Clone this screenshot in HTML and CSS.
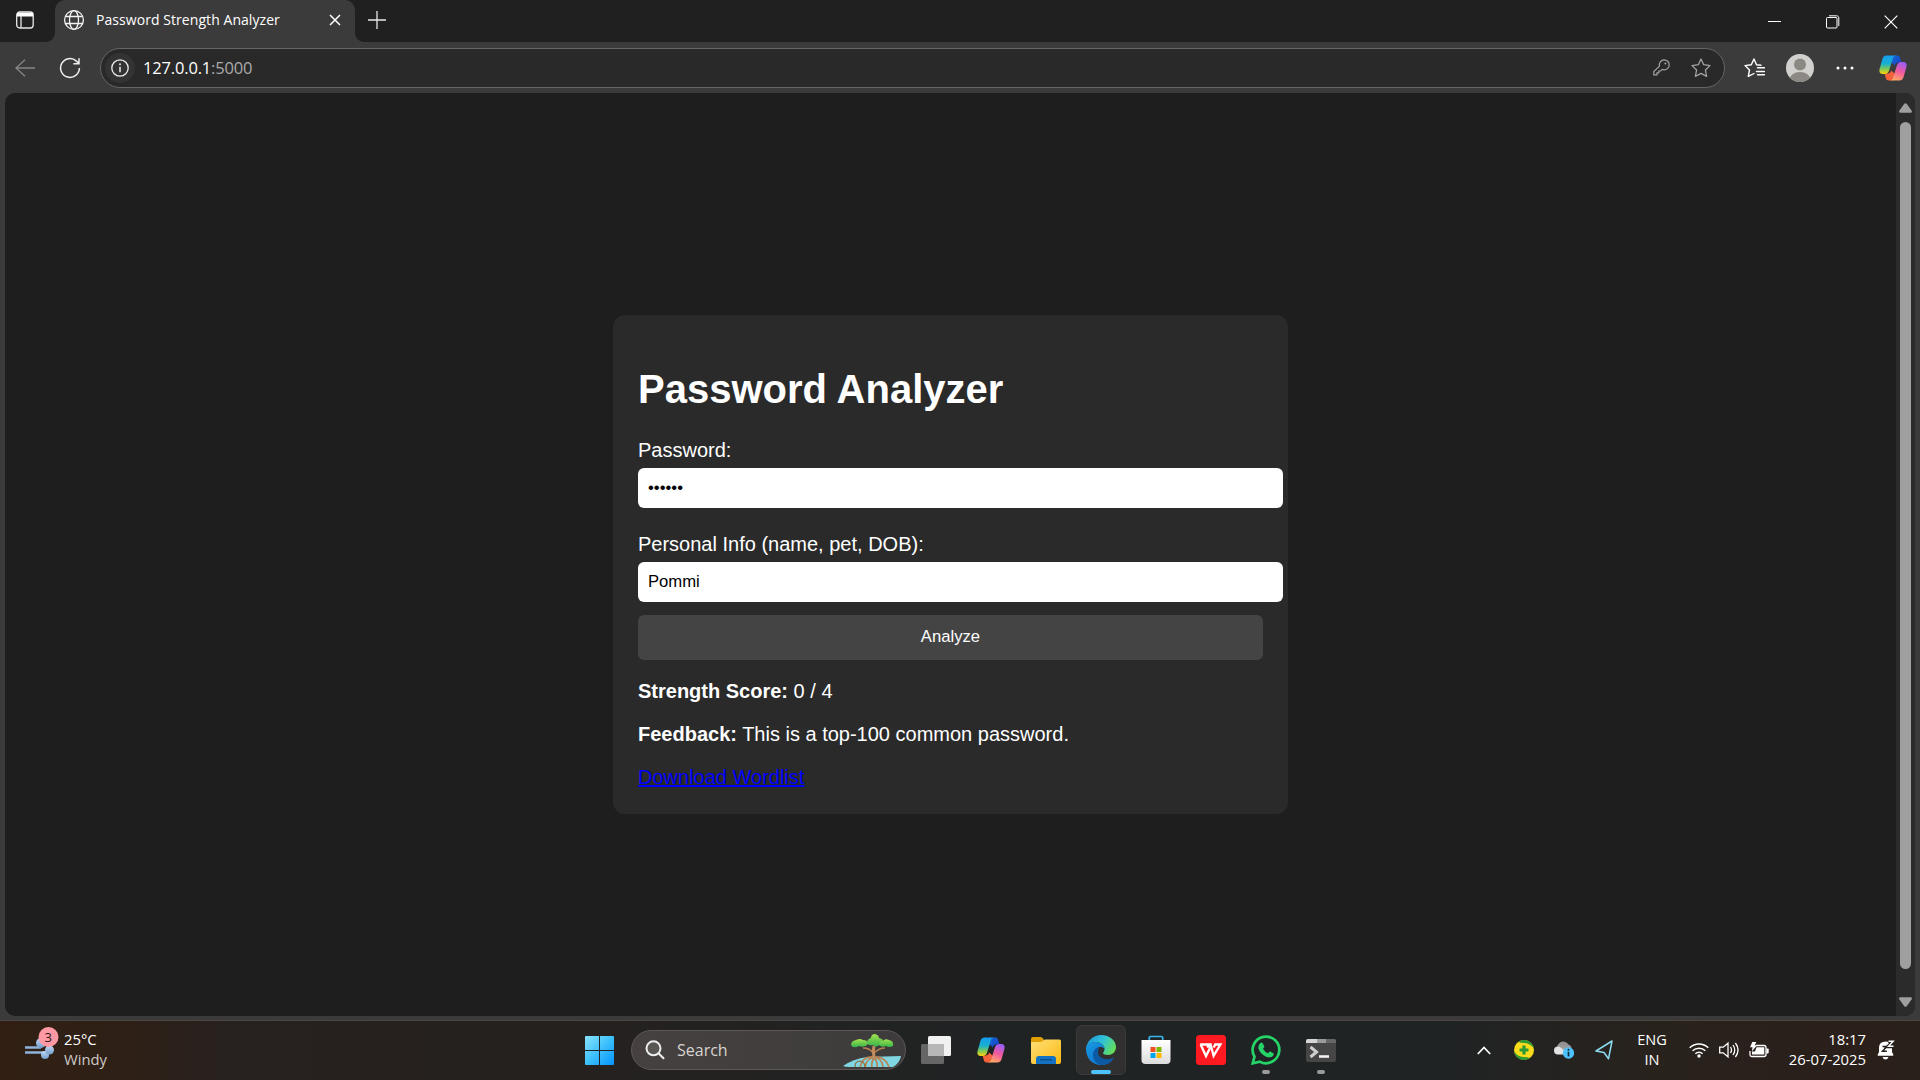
FILE: index.html
```html
<!DOCTYPE html>
<html lang="en">
<head>
<meta charset="utf-8">
<title>Password Strength Analyzer</title>
<link rel="stylesheet" href="styles.css">
</head>
<body>
<svg class="defs" width="0" height="0" aria-hidden="true">
  <defs>
    <linearGradient id="cpL" x1="0" y1="0" x2="0" y2="1"><stop offset="0" stop-color="#159cf0"/><stop offset=".45" stop-color="#18b0cf"/><stop offset=".72" stop-color="#7cc858"/><stop offset="1" stop-color="#ffd10a"/></linearGradient>
    <linearGradient id="cpR" x1=".7" y1="0" x2=".3" y2="1"><stop offset="0" stop-color="#9a5cf5"/><stop offset=".5" stop-color="#f45a9c"/><stop offset="1" stop-color="#ffad62"/></linearGradient>
    <linearGradient id="cpT" x1="0" y1="0" x2="1" y2="1"><stop offset="0" stop-color="#1268d8"/><stop offset="1" stop-color="#1b3fc0"/></linearGradient>
    <linearGradient id="win" gradientUnits="userSpaceOnUse" x1="0" y1="0" x2="29" y2="29"><stop offset="0" stop-color="#8be3fe"/><stop offset=".5" stop-color="#3cc0fc"/><stop offset="1" stop-color="#0594fb"/></linearGradient>
    <linearGradient id="folder" x1="0" y1="0" x2="1" y2="1"><stop offset="0" stop-color="#ffe07a"/><stop offset="1" stop-color="#fbb90f"/></linearGradient>
    <linearGradient id="edgeTop" x1="0" y1=".3" x2="1" y2=".7"><stop offset="0" stop-color="#1d9bdc"/><stop offset=".5" stop-color="#32c3d4"/><stop offset="1" stop-color="#69e04f"/></linearGradient>
    <linearGradient id="edgeLow" x1="0" y1="0" x2="1" y2="1"><stop offset="0" stop-color="#169be3"/><stop offset="1" stop-color="#1066c4"/></linearGradient>
    <linearGradient id="bag" x1="0" y1="0" x2="0" y2="1"><stop offset="0" stop-color="#fff"/><stop offset="1" stop-color="#dcdcdc"/></linearGradient>
    <linearGradient id="wind" x1="0" y1="0" x2="0" y2="1"><stop offset="0" stop-color="#c4dbf4"/><stop offset="1" stop-color="#6f9cc9"/></linearGradient>
    <linearGradient id="leaf" x1="0" y1="0" x2="0" y2="1"><stop offset="0" stop-color="#a4e04e"/><stop offset="1" stop-color="#35b54a"/></linearGradient>
    <linearGradient id="cloud" x1="0" y1="0" x2="0" y2="1"><stop offset="0" stop-color="#8d8d8d"/><stop offset="1" stop-color="#a8a8a8"/></linearGradient>
    <symbol id="copilot" viewBox="0 0 28 26">
      <path d="M15 .5h3.200c1.600 0 2.500.8 2.900 2.200l1.400 4.800h-3c-2 0-3.100 1.100-3.700 3L12 7z" fill="url(#cpT)"/>
      <path d="M13 25.500H9.800c-1.600 0-2.500-.8-2.900-2.200L5.500 18.500h3c2 0 3.100-1.100 3.700-3L16 19z" fill="#f4633c"/>
      <path d="M7.500.5h9.700c-2 0-2.900 1.500-3.500 3.500l-3.600 11.500c-.7 2.200-2 3.500-4.500 3.500H3.500C.8 19-.2 16.700.6 14L3.400 4C4.100 1.700 5.300.5 7.500.5z" fill="url(#cpL)"/>
      <path d="M20.500 25.500h-9.700c2 0 2.900-1.500 3.500-3.500l3.600-11.500c.7-2.200 2-3.500 4.500-3.500h2.100c2.700 0 3.700 2.300 2.900 5l-2.800 10c-.7 2.300-1.900 3.500-4.100 3.500z" fill="url(#cpR)"/>
    </symbol>
  </defs>
</svg>

<header class="tabstrip">
  <div class="strip-left">
    <svg width="20" height="20" viewBox="0 0 20 20" fill="none" stroke="#e8e8e8" stroke-width="1.300"><rect x="1.700" y="2" width="16.500" height="16" rx="3"/><path d="M2 2.800h16v3.700H2z" fill="#fff" stroke="none"/><path d="M6 6v12"/></svg>
  </div>
  <div class="tab-slot">
    <div class="tab">
      <svg width="22" height="22" viewBox="0 0 22 22" fill="none" stroke="#f2f2f2" stroke-width="1.300"><circle cx="11" cy="11" r="9.400"/><ellipse cx="11" cy="11" rx="4.500" ry="9.400"/><path d="M2.300 7.500h17.400M2.300 14.500h17.400"/></svg>
      <span class="tab-title">Password Strength Analyzer</span>
      <svg class="tab-close" width="12" height="12" viewBox="0 0 12 12" stroke="#fff" stroke-width="1.500"><path d="M1 1l10 10M11 1L1 11"/></svg>
    </div>
  </div>
  <div class="strip-right">
    <svg width="18" height="18" viewBox="0 0 18 18" stroke="#e8e8e8" stroke-width="1.300"><path d="M9 0v18M0 9h18"/></svg>
    <div class="window-buttons">
      <svg width="14" height="14" viewBox="0 0 14 14" stroke="#fff"><path d="M0 6.500h13"/></svg>
      <svg width="14" height="14" viewBox="0 0 14 14" fill="none" stroke="#fff"><rect x=".5" y="2.500" width="10.500" height="10.500" rx="1"/><path d="M3 .8h7.500c1.400 0 2.300.9 2.300 2.300V11"/></svg>
      <svg width="14" height="14" viewBox="0 0 14 14" stroke="#fff" stroke-width="1.200"><path d="M.7.7l12.600 12.600M13.300.7L.7 13.300"/></svg>
    </div>
  </div>
</header>

<nav class="toolbar">
  <svg class="back" width="20" height="18" viewBox="0 0 20 18" fill="none" stroke="#858585" stroke-width="1.300"><path d="M20 9H1M10 .7L1 9l9 8.300"/></svg>
  <svg class="reload" width="22" height="22" viewBox="0 0 22 22" fill="none" stroke="#f0f0f0" stroke-width="1.500"><path d="M20.400 11a9.400 9.400 0 1 1-3-6.900L20 6.500M20 1.200v5.500h-5.600"/></svg>
  <div class="address">
    <div class="site-info">
      <svg width="18" height="18" viewBox="0 0 18 18" fill="none" stroke="#eee" stroke-width="1.300"><circle cx="9" cy="9" r="8.200"/><path d="M9 7.700v5.500" stroke-width="1.500"/><circle cx="9" cy="5.300" r=".95" fill="#eee" stroke="none"/></svg>
    </div>
    <span class="url">127.0.0.1<span class="port">:5000</span></span>
    <svg class="key" width="17" height="17" viewBox="0 0 17 17" fill="none" stroke="#a2a2a2" stroke-width="1.200"><path d="M11.200.8a5 5 0 0 1 0 10c-.7 0-1.400-.1-2-.4L7.700 12H5.800v1.900H4v1.900H.8v-3.300l5.700-5.400A5 5 0 0 1 11.200.8z"/><circle cx="12.400" cy="4.600" r="1" fill="#a2a2a2" stroke="none"/></svg>
    <svg class="star" width="20" height="20" viewBox="0 0 20 20" fill="none" stroke="#a2a2a2" stroke-width="1.300" stroke-linejoin="round"><path d="M10 1l2.700 5.700 6.300.9-4.600 4.400 1.200 6.400L10 15.400l-5.600 3 1.200-6.400L1 7.600l6.300-.9z"/></svg>
  </div>
  <svg class="favorites" width="21" height="20" viewBox="0 0 21 20" fill="none" stroke="#fff" stroke-width="1.400" stroke-linejoin="round" stroke-linecap="round"><path d="M17 7.200l-4.500-.5L10 1 7.300 6.700 1 7.600 5.500 12l-1.200 6.400L10 15.500M13.500 9.800h7M12.500 13.500h8M13.500 16.800h7"/></svg>
  <svg class="profile" width="28" height="28" viewBox="0 0 28 28"><clipPath id="av"><circle cx="14" cy="14" r="14"/></clipPath><g clip-path="url(#av)"><path d="M0 0h28v28H0z" fill="#d2d0ce"/><circle cx="14" cy="10.500" r="6" fill="#8c8884"/><ellipse cx="14" cy="26" rx="10.500" ry="8" fill="#8c8884"/></g></svg>
  <svg class="more" width="18" height="4" viewBox="0 0 18 4" fill="#fff"><circle cx="2" cy="2" r="1.500"/><circle cx="9" cy="2" r="1.500"/><circle cx="16" cy="2" r="1.500"/></svg>
  <svg class="assistant" width="28" height="26"><use href="#copilot"/></svg>
</nav>

<div class="viewport-frame">
  <div class="viewport">
    <main class="page">
      <form class="card">
        <h1>Password Analyzer</h1>
        <label for="pw">Password:</label>
        <input id="pw" type="password" value="123456">
        <label class="second" for="info">Personal Info (name, pet, DOB):</label>
        <input id="info" type="text" value="Pommi">
        <button type="button">Analyze</button>
        <p><strong>Strength Score:</strong> 0 / 4</p>
        <p><strong>Feedback:</strong> This is a top-100 common password.</p>
        <a href="#">Download Wordlist</a>
      </form>
    </main>
    <div class="scrollbar">
      <svg width="13" height="10" viewBox="0 0 13 10" fill="#9f9f9f"><path d="M5.300.8q1.200-1.200 2.400 0l5 7q.6 2-1 2H1.300q-1.600 0-1-2z"/></svg>
      <div class="thumb"></div>
      <svg width="13" height="10" viewBox="0 0 13 10" fill="#9f9f9f"><path d="M5.300 9.200q1.200 1.200 2.400 0l5-7q.6-2-1-2H1.300q-1.600 0-1 2z"/></svg>
    </div>
  </div>
</div>

<footer class="taskbar">
  <div class="weather">
    <svg class="weather-icon" width="36" height="34" viewBox="0 0 36 34"><path d="M1 20.500h16M1 25.500h22" stroke="#8fb4dc" stroke-width="2.600"/><circle cx="17" cy="16" r="5" fill="url(#wind)"/><circle cx="21" cy="28" r="4" fill="url(#wind)"/><circle cx="25.500" cy="23" r="4.500" fill="url(#wind)"/><circle cx="24.500" cy="10" r="10" fill="#ff99a4"/><text class="badge" x="24.300" y="15" text-anchor="middle">3</text></svg>
    <div class="weather-text"><span>25°C</span><span class="muted">Windy</span></div>
  </div>

  <div class="apps">
    <div class="app start"><svg width="29" height="29" viewBox="0 0 29 29" fill="url(#win)"><path d="M1 0h13v14H0V1q0-1 1-1zM15 0h13q1 0 1 1v13H15zM0 15h14v14H1q-1 0-1-1zM15 15h14v13q0 1-1 1H15z"/></svg></div>
    <div class="search">
      <svg width="20" height="20" viewBox="0 0 20 20" fill="none" stroke="#eee" stroke-width="2" stroke-linecap="round"><circle cx="8.500" cy="8.300" r="7" fill="#5a5654"/><path d="M13.700 13.500l4.800 4.800"/></svg>
      <span>Search</span>
      <svg class="tree" width="58" height="35" viewBox="0 0 58 35"><path d="M0 32Q10 25 24 23l34-1q-1 7-8 11H6q-4 0-6-1z" fill="#7fd6e2"/><g fill="none" stroke="#b98250" stroke-width="1.600"><path d="M20 14q7 0 10 5M42 14q-6 0-11 5M30 23q-10-1-13 10M30 24q-6 0-8 9M31 24q-3 4-2 9M31 24q4 3 3 9M31 23q8 1 9 10M31 23q11-1 15 10"/><path d="M12 33q0-6 5-6 5 1 5 6" stroke-width="1.200" stroke="#8f6c36"/></g><path d="M31 12q-1.500 5 0 11" fill="none" stroke="#c48c5c" stroke-width="3"/><g fill="url(#leaf)"><path d="M8 11q0-4 5-5 4-2 7 0 5 0 5 4-3 4-9 2-6 3-8-1z"/><path d="M24 9q0-4 4-5 0-4 4-4 4 1 4 4 5 1 5 5-1 3-5 2-3 3-6 0-5 1-6-2z"/><path d="M36 11q0-4 4-4 2-3 6-1 5 1 4 6-4 2-7 0-4 2-7-1z"/></g></svg>
    </div>
    <div class="app"><svg width="30" height="28" viewBox="0 0 30 28"><rect y="8" width="23" height="20" rx="1.500" fill="#666"/><rect x="7" width="23" height="20" rx="1.500" fill="#f1f1f1"/><path d="M7 8h16v12H8.500Q7 20 7 18.500z" fill="#b7b7b7"/></svg></div>
    <div class="app"><svg width="28" height="26"><use href="#copilot"/></svg></div>
    <div class="app"><svg width="30" height="27" viewBox="0 0 30 27"><path d="M0 2q0-2 2-2h7.500q1.500 0 2.500 1.500L14 5v4H0z" fill="#e0a005"/><path d="M0 6q0-1 1-1h9l4-2.500h14.500q1.500 0 1.500 1.500v21q0 2-2 2H2q-2 0-2-2z" fill="url(#folder)"/><path d="M5 27v-5q0-3 3-3h14q3 0 3 3v5z" fill="#1372c4"/><path d="M9 22.700h12" stroke="#0c4d8c" stroke-width="1.400"/></svg></div>
    <div class="app active"><svg width="30" height="30" viewBox="0 0 30 30"><path d="M0 14C1 5 8 0 15 0c9 0 15 6 15 12 0 5-4 8-8 8-3 0-5-1-5-2 0-.7 1.500-1.500 1.500-4 0-3-3-7-9-7C5 7 1 10 0 14z" fill="url(#edgeTop)"/><path d="M0 14c0-4 4-7 9.500-7 6 0 9 4 9 7-1-1.500-2.500-2-4-2-3 0-5 2.500-5 6 0 5 4 9 10 9 3 0 5-.8 7-1.800C24 28 20 30 15 30 6 30 0 23 0 14z" fill="url(#edgeLow)"/><path d="M13 12c-4 1-6 4-6 8 0 5 4 9.500 9 10 5-.2 8.500-2.500 11.300-6.300.4-.8-.2-1.200-.8-.8-1.500.8-3.500 1.300-5.500 1.300-5 0-9-3-9-7 0-2 .7-3.500 1-5.200z" fill="#0c59a4"/></svg><i class="pill"></i></div>
    <div class="app"><svg width="30" height="30" viewBox="0 0 30 30"><path d="M8.300 7V2.500q0-1 1-1h11.400q1 0 1 1V7" fill="none" stroke="#35b5ec" stroke-width="1.700"/><path d="M.5 5h29v20q0 4-4 4H4.500q-4 0-4-4z" fill="url(#bag)"/><path d="M9.500 12h5v5h-5z" fill="#f25022"/><path d="M15.500 12h5v5h-5z" fill="#7fba00"/><path d="M9.500 18h5v5h-5z" fill="#00a4ef"/><path d="M15.500 18h5v5h-5z" fill="#ffb900"/></svg></div>
    <div class="app"><svg width="30" height="30" viewBox="0 0 30 30"><rect width="30" height="30" rx="3.500" fill="#ff1921"/><path d="M4.200 9.500h9.300l-2.300 3M4.600 9.500L10 21l5-10 2.600 9.800 6.800-11.300h-5.200l-1.500 3" fill="none" stroke="#fff" stroke-width="2.300"/></svg></div>
    <div class="app"><svg width="30" height="30" viewBox="0 0 30 30"><path d="M1.700 28.300l1.800-6.700A13.300 13.300 0 1 1 8.700 26.600z" fill="none" stroke="#25d366" stroke-width="2.700"/><path d="M9.200 8.200q1.300-1.300 2.500 0l1.700 3.300q0 .8-1.400 2.200 1.800 3.300 5 4.600 1.300-1.800 2.200-1.700l3.200 1.600q.9 1.300-.8 3-2.500 2.200-7 .2-5.300-2.700-7-7.400-.9-3.600 1.600-5.800z" fill="#25d366"/></svg><i class="dot"></i></div>
    <div class="app"><svg width="30" height="23" viewBox="0 0 30 23"><rect width="30" height="23" rx="2" fill="#464646"/><path d="M0 4V2q0-2 2-2h9v4z" fill="#d6d6d6"/><path d="M11 0h9v4h-9z" fill="#9b9b9b"/><path d="M20 0h8q2 0 2 2v2H20z" fill="#666"/><path d="M4.500 8l6 5-6 5" fill="none" stroke="#cfcfcf" stroke-width="3"/><path d="M13 17.500h10" stroke="#f2f2f2" stroke-width="2.600"/></svg><i class="dot"></i></div>
  </div>

  <div class="tray">
    <div class="tray-icon"><svg width="14" height="9" viewBox="0 0 14 9" fill="none" stroke="#fff" stroke-width="1.700"><path d="M.8 8L7 1.500 13.200 8"/></svg></div>
    <div class="tray-icon"><svg width="20" height="20" viewBox="0 0 20 20"><circle cx="10" cy="10" r="10" fill="#fadb19"/><path d="M4 2Q12-3 18 4q1.500 2 1.700 4.500-3-5-9-5.500-4 0-6.700-1z" fill="#2b9a36"/><path d="M16 18q-8 5-14-2Q.5 14 .3 11.500q3 5 9 5.500 4 0 6.700 1z" fill="#2b9a36"/><path d="M10 5.500v9M5.500 10h9" stroke="#2b9a36" stroke-width="3.200"/></svg></div>
    <div class="tray-icon"><svg width="20" height="18" viewBox="0 0 20 18"><path d="M4 10A6 6 0 0 1 14.500 3.500q3 1 3 4V12H4z" fill="url(#cloud)"/><path d="M4 13.500a4 4 0 0 1 0-8q2 0 3.500 1.500L14 13.500z" fill="#e2e2e2"/><circle cx="14.500" cy="12" r="5.700" fill="#4cc2ff"/><path d="M14.500 10.800v4.600" stroke="#102a3a" stroke-width="1.700"/><circle cx="14.500" cy="8.800" r="1" fill="#102a3a"/></svg></div>
    <div class="tray-icon location"><svg width="18" height="20" viewBox="0 0 18 20" fill="none" stroke="#8bdcf0" stroke-width="1.500" stroke-linejoin="round"><path d="M17 1L1 11l8 1.500 4.500 6.300z"/></svg></div>
    <div class="lang"><span>ENG</span><span>IN</span></div>
    <div class="quick">
      <svg width="20" height="16" viewBox="0 0 20 16" fill="none" stroke="#fff" stroke-width="1.500"><path d="M.7 5.800a13.200 13.200 0 0 1 18.600 0M3.600 8.800a9 9 0 0 1 12.800 0M6.400 11.700a5.100 5.100 0 0 1 7.200 0"/><circle cx="10" cy="14" r="1.700" fill="#fff" stroke="none"/></svg>
      <svg width="20" height="18" viewBox="0 0 20 18" fill="none" stroke="#fff" stroke-width="1.300"><path d="M.7 6.200h3.500l4.800-4v13.600l-4.800-4H.7zM11.500 6q2 3 0 6M14 4q3.500 5 0 10M16.400 2q5.300 7 0 14"/></svg>
      <svg width="20" height="16" viewBox="0 0 20 16"><path d="M7 3.500h8q2 0 2 2v7q0 2-2 2H3q-2 0-2-2V9" fill="none" stroke="#fff" stroke-width="1.300"/><path d="M7.500 5.300h7.800v7.300H3V9.500h3z" fill="#fff"/><path d="M17.500 6.500h1.200q1 0 1 1v3q0 1-1 1h-1.200z" fill="#fff"/><path d="M3.300 0h4L5.800 3.200H8L2.800 9.500l.8-4.300H1z" fill="#fff"/></svg>
    </div>
    <div class="clock"><span>18:17</span><span>26-07-2025</span></div>
    <svg class="bell" width="18" height="20" viewBox="0 0 18 20"><path d="M9 1.500a6 6 0 0 1 6 6V12l1.500 3q0 .8-1 .8h-14q-1 0-1-.8L2 12V7.500q0-6 7-6zM5.500 17h6q-.8 2.600-3 2.600T5.500 17z" fill="#fff"/><path d="M5.500 6.500h4.200L5.500 11.300h4.400" fill="none" stroke="#25211e" stroke-width="1.500"/><path d="M11 1h5.500L11 6.600h6" fill="none" stroke="#25211e" stroke-width="3.500"/><path d="M11.500 1.200h4.700L11.500 6.200h5" fill="none" stroke="#fff" stroke-width="1.400"/></svg>
  </div>
</footer>
</body>
</html>
```
FILE: styles.css
```css
* { box-sizing: border-box; }
body {
  margin: 0;
  width: 1920px;
  height: 1080px;
  overflow: hidden;
  display: flex;
  flex-direction: column;
  background: #3b3b3b;
  color: #fff;
  font-family: "Open Sans", "Noto Sans", sans-serif;
}
svg { display: block; flex: none; }
.defs { position: absolute; }

/* Tab strip */
.tabstrip { display: flex; height: 42px; flex: none; }
.strip-left { width: 55px; padding: 10px 0 0 15px; background: #202020; border-bottom-right-radius: 9px; }
.tab-slot { width: 300px; background: linear-gradient(#202020 50%, #3b3b3b 50%); }
.tab { display: flex; align-items: center; height: 42px; padding: 0 14px 2px 8px; background: #3b3b3b; border-radius: 10px 10px 0 0; }
.tab-title { margin-left: 11px; padding-bottom: 2px; font-size: 14px; letter-spacing: 0.060px; white-space: nowrap; }
.tab-close { margin-left: auto; }
.strip-right { flex: 1; display: flex; align-items: flex-start; padding: 11px 22px 0 13px; background: #202020; border-bottom-left-radius: 9px; }
.window-buttons { margin: 4px 0 0 auto; display: flex; gap: 44px; }

/* Toolbar */
.toolbar { display: flex; align-items: center; height: 51px; flex: none; padding: 0 13px 0 15px; }
.reload { margin-left: 24px; }
.address { display: flex; align-items: center; width: 1625px; height: 40px; margin-left: 19px; padding: 0 13px 0 4px; background: #292929; border: 1px solid #666; border-radius: 20px; }
.site-info { display: grid; place-items: center; width: 30px; height: 30px; border-radius: 50%; background: #333; }
.url { margin-left: 8px; font-size: 16.500px; letter-spacing: -0.170px; }
.port { color: #a9a9a9; }
.key { margin-left: auto; }
.star { margin-left: 21px; }
.favorites { margin-left: 19px; }
.profile { margin-left: 21px; }
.more { margin-left: 22px; }
.assistant { margin-left: auto; }

/* Web content */
.viewport-frame { flex: none; height: 927px; padding: 0 5px 4px; }
.viewport { display: flex; height: 923px; border-radius: 10px; overflow: hidden; background: #1e1e1e; }
.page { flex: 1; display: flex; align-items: center; justify-content: center; padding-top: 20px; font-family: "Liberation Sans", Arial, sans-serif; font-size: 20px; }
.card { width: 675px; height: 499px; padding: 25px; border-radius: 12px; background: #2a2a2a; }
.card h1 { margin: 26px 0 27px; font-size: 40px; line-height: 46px; }
.card label { display: block; line-height: 23px; }
.card label.second { margin-top: 25px; }
.card input { display: block; width: 645px; height: 40px; margin-top: 6px; padding: 0 10px 1px; border: 0; border-radius: 6px; background: #fff; color: #000; font: 16.667px "Liberation Sans", Arial, sans-serif; }
.card button { display: block; width: 625px; height: 45px; margin-top: 13px; padding: 0 0 2px; border: 0; border-radius: 6px; background: #444; color: #fff; font: 16.667px "Liberation Sans", Arial, sans-serif; }
.card p { margin: 20px 0; line-height: 23px; }
.card a { color: #00f; line-height: 23px; text-decoration-thickness: 2px; text-decoration-skip-ink: none; }
.scrollbar { width: 19px; display: flex; flex-direction: column; align-items: center; padding: 10px 0 9px; background: #2b2b2b; }
.thumb { flex: 1; width: 11px; margin: 9px 0 28px; border-radius: 6px; background: #9f9f9f; }

/* Taskbar */
.taskbar { display: flex; align-items: center; height: 60px; flex: none; padding-bottom: 1px; border-top: 1px solid #4a4541; background: linear-gradient(90deg, #311f13 0, #2e2017 130px, #27211f 230px, #25211f 550px, #202324 1000px, #202324 1450px, #28221d 1650px, #2b1f1a 1880px, #28211b 1920px); }
.weather { width: 572px; display: flex; align-items: center; padding-left: 24px; }
.weather-icon { margin-bottom: 12px; }
.weather-text { display: flex; flex-direction: column; margin: 0 0 2px 4px; font-size: 14.800px; line-height: 20px; }
.muted { color: #cfcac7; }
.badge { fill: #2a1719; font: 13px "Open Sans", sans-serif; }
.apps { display: flex; align-items: center; }
.app { position: relative; display: grid; place-items: center; width: 50px; height: 50px; margin-right: 5px; border-radius: 6px; }
.app.start { width: 55px; margin-right: 0; }
.app.active { background: #303030; border: 1px solid #3a3a3a; }
.pill, .dot { position: absolute; bottom: 1px; left: 50%; transform: translateX(-50%); height: 4px; border-radius: 2px; }
.pill { bottom: 0; width: 20px; background: #4cc2ff; }
.dot { width: 8px; background: #9a9a9a; }
.search { display: flex; align-items: center; width: 275px; height: 40px; margin: 0 5px 0 4px; padding: 0 4px 0 13px; border: 1px solid #5d5856; border-radius: 20px; background: linear-gradient(90deg, #464140, #3d3b3b); color: #d6d3d1; font-size: 16px; }
.search span { margin-left: 12px; }
.tree { margin: 2px 0 0 auto; }
.tray { display: flex; align-items: center; margin-left: auto; padding-right: 25px; }
.tray-icon { display: grid; place-items: center; width: 40px; height: 40px; }
.tray-icon.location { width: 39px; }
.lang { display: flex; flex-direction: column; align-items: center; width: 58px; font-size: 14.500px; line-height: 20px; }
.quick { display: flex; align-items: center; gap: 10px; margin-left: 8px; }
.clock { display: flex; flex-direction: column; align-items: flex-end; width: 97px; margin-bottom: 2px; font-size: 14.800px; line-height: 20px; }
.bell { margin-left: 11px; }
```
